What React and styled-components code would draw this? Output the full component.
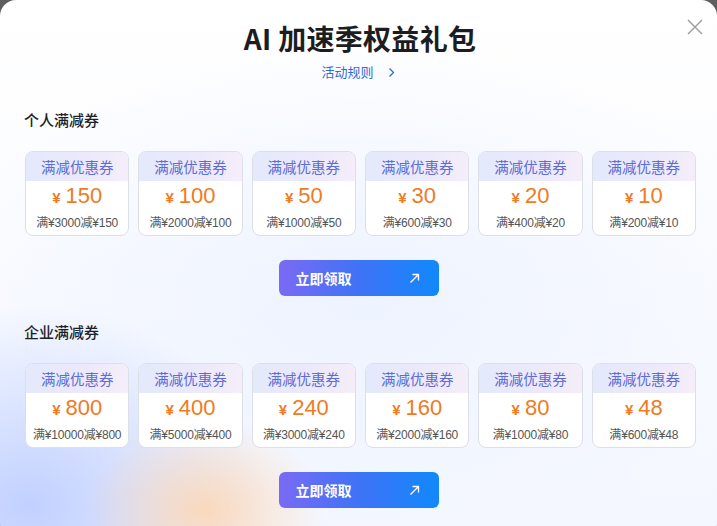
import React from "react";
import styled, { createGlobalStyle } from "styled-components";

const Global = createGlobalStyle`
  html, body { margin: 0; padding: 0; background: #5e5e5e; overflow: hidden; }
  body { font-family: "Noto Sans CJK SC", "Noto Sans", sans-serif; }
  * { box-sizing: border-box; }
`;

const Modal = styled.div`
  position: relative;
  width: 717px;
  height: 540px;
  border-radius: 16px;
  overflow: hidden;
  background:
    radial-gradient(ellipse 120px 90px at 205px 510px, rgba(255, 212, 172, 0.8), rgba(255, 212, 172, 0) 100%),
    radial-gradient(ellipse 240px 200px at 30px 505px, rgba(180, 198, 255, 0.8), rgba(180, 198, 255, 0) 100%),
    radial-gradient(ellipse 420px 260px at 360px 300px, rgba(236, 242, 255, 0.9), rgba(236, 242, 255, 0) 100%),
    linear-gradient(180deg, #ffffff 0%, #fbfcff 40%, #f4f7ff 100%);
  padding: 18px 21px 0 24px;
  display: flex;
  flex-direction: column;
`;

const Close = styled.button`
  position: absolute;
  top: 18px;
  right: 13px;
  width: 18px;
  height: 18px;
  padding: 0;
  border: none;
  background: none;
  cursor: pointer;
`;

const Header = styled.div`
  display: flex;
  flex-direction: column;
  align-items: center;
`;

const Title = styled.h1`
  margin: 0;
  font-size: 28px;
  line-height: 40px;
  font-weight: 700;
  color: #1d1d1f;
  letter-spacing: 0.3px;
`;

const RuleLink = styled.a`
  margin-top: 4px;
  display: flex;
  align-items: center;
  gap: 14px;
  font-size: 13px;
  line-height: 20px;
  color: #2f6bd3;
  text-decoration: none;
  margin-right: 4px;
`;

const SectionTitle = styled.h2`
  margin: ${(p) => p.$top}px 0 0 0;
  font-size: 15px;
  line-height: 22px;
  height: 22px;
  font-weight: 500;
  color: #1f1f1f;
`;

const CardRow = styled.div`
  margin-top: 20px;
  display: grid;
  grid-template-columns: repeat(6, 1fr);
  gap: 9px;
  padding-left: 1px;
`;

const Card = styled.div`
  height: 85px;
  border: 1px solid #dcdfe8;
  border-radius: 8px;
  background: #ffffff;
  overflow: hidden;
  display: flex;
  flex-direction: column;
`;

const CardHead = styled.div`
  height: 29px;
  flex: none;
  display: flex;
  align-items: center;
  justify-content: center;
  background: linear-gradient(90deg, #e4e9fc 0%, #ece9fb 60%, #f5eef9 100%);
  font-size: 14.5px;
  color: #5d6cd6;
`;

const Amount = styled.div`
  height: 30px;
  display: flex;
  align-items: baseline;
  justify-content: center;
  gap: 5px;
  color: #ef7b22;
  font-family: "Liberation Sans", "Noto Sans CJK SC", sans-serif;
`;

const Yen = styled.span`
  font-size: 15px;
  font-weight: 700;
  line-height: 30px;
`;

const Num = styled.span`
  font-size: 22px;
  line-height: 30px;
`;

const Cond = styled.div`
  margin-top: 4px;
  text-align: center;
  font-family: "Liberation Sans", "Noto Sans CJK SC", sans-serif;
  font-size: 12px;
  line-height: 16px;
  color: #555;
  letter-spacing: -0.2px;
  white-space: nowrap;
`;

const ButtonWrap = styled.div`
  margin-top: ${(p) => p.$top}px;
  display: flex;
  justify-content: center;
  padding-right: 3px;
`;

const ClaimButton = styled.button`
  width: 160px;
  height: 36px;
  border: none;
  border-radius: 6px;
  background: linear-gradient(90deg, #7a6af4 0%, #3f73f6 50%, #1188fb 100%);
  color: #fff;
  font-family: inherit;
  font-size: 14px;
  font-weight: 700;
  display: flex;
  align-items: center;
  justify-content: space-between;
  padding: 0 19px 0 17px;
  cursor: pointer;
`;

const personal = [
  ["150", "满¥3000减¥150"],
  ["100", "满¥2000减¥100"],
  ["50", "满¥1000减¥50"],
  ["30", "满¥600减¥30"],
  ["20", "满¥400减¥20"],
  ["10", "满¥200减¥10"],
];

const company = [
  ["800", "满¥10000减¥800"],
  ["400", "满¥5000减¥400"],
  ["240", "满¥3000减¥240"],
  ["160", "满¥2000减¥160"],
  ["80", "满¥1000减¥80"],
  ["48", "满¥600减¥48"],
];

function Coupons({ items }) {
  return (
    <CardRow>
      {items.map(([n, c]) => (
        <Card key={c}>
          <CardHead>满减优惠券</CardHead>
          <Amount>
            <Yen>¥</Yen>
            <Num>{n}</Num>
          </Amount>
          <Cond>{c}</Cond>
        </Card>
      ))}
    </CardRow>
  );
}

function Claim({ top }) {
  return (
    <ButtonWrap $top={top}>
      <ClaimButton>
        <span>立即领取</span>
        <svg width="11" height="11" viewBox="0 0 11 11" fill="none" stroke="#fff" strokeWidth="1.3">
          <path d="M1.5 9.5L9.5 1.5M3.5 1.5H9.5V7.5" />
        </svg>
      </ClaimButton>
    </ButtonWrap>
  );
}

export default function App() {
  return (
    <>
      <Global />
      <Modal>
        <Close aria-label="close">
          <svg width="18" height="18" viewBox="0 0 18 18" stroke="#9a9a9a" strokeWidth="1.4" fill="none">
            <path d="M2 2L16 16M16 2L2 16" />
          </svg>
        </Close>
        <Header>
          <Title>AI 加速季权益礼包</Title>
          <RuleLink href="#">
            活动规则
            <svg width="7" height="11" viewBox="0 0 7 11" fill="none" stroke="#2f6bd3" strokeWidth="1.3">
              <path d="M1.5 1.5L5.5 5.5L1.5 9.5" />
            </svg>
          </RuleLink>
        </Header>
        <SectionTitle $top={27}>个人满减券</SectionTitle>
        <Coupons items={personal} />
        <Claim top={24} />
        <SectionTitle $top={25}>企业满减券</SectionTitle>
        <Coupons items={company} />
        <Claim top={24} />
      </Modal>
    </>
  );
}
